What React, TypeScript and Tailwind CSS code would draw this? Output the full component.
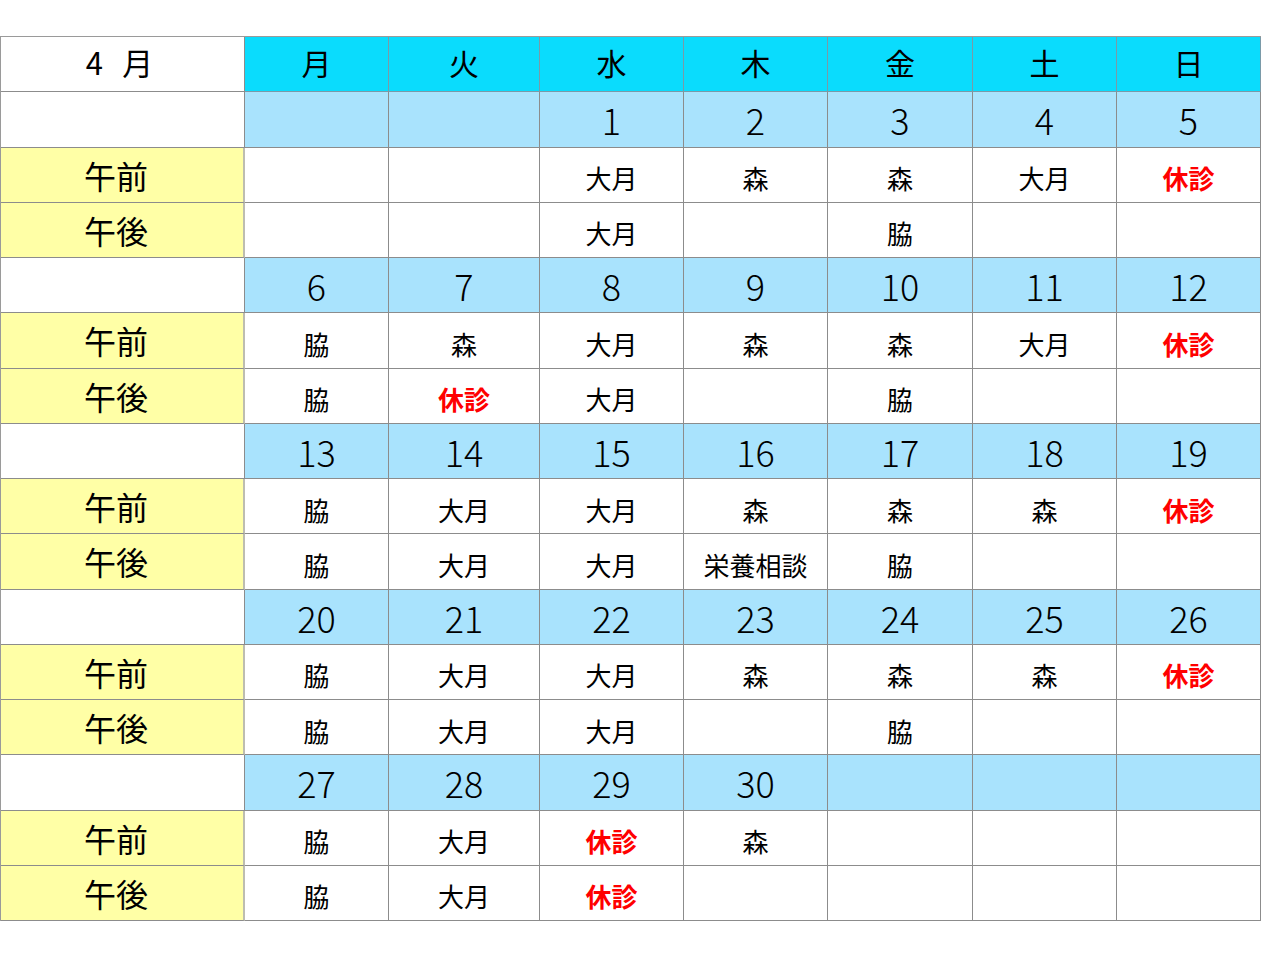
import React from "react";

const cols = ["月", "火", "水", "木", "金", "土", "日"];

type Week = { dates: (number | null)[]; am: string[]; pm: string[] };

const weeks: Week[] = [
  {
    dates: [null, null, 1, 2, 3, 4, 5],
    am: ["", "", "大月", "森", "森", "大月", "休診"],
    pm: ["", "", "大月", "", "脇", "", ""],
  },
  {
    dates: [6, 7, 8, 9, 10, 11, 12],
    am: ["脇", "森", "大月", "森", "森", "大月", "休診"],
    pm: ["脇", "休診", "大月", "", "脇", "", ""],
  },
  {
    dates: [13, 14, 15, 16, 17, 18, 19],
    am: ["脇", "大月", "大月", "森", "森", "森", "休診"],
    pm: ["脇", "大月", "大月", "栄養相談", "脇", "", ""],
  },
  {
    dates: [20, 21, 22, 23, 24, 25, 26],
    am: ["脇", "大月", "大月", "森", "森", "森", "休診"],
    pm: ["脇", "大月", "大月", "", "脇", "", ""],
  },
  {
    dates: [27, 28, 29, 30, null, null, null],
    am: ["脇", "大月", "休診", "森", "", "", ""],
    pm: ["脇", "大月", "休診", "", "", "", ""],
  },
];

const font = { fontFamily: '"Noto Sans CJK JP", "Noto Sans", sans-serif' };

function Cell({ text }: { text: string }) {
  const closed = text === "休診";
  return (
    <div
      className={
        "h-[55.25px] flex items-center justify-center pt-[6px] bg-white border-r border-b border-[#8c8c8c] text-[26px] " +
        (closed ? "text-[#ff0000] font-bold" : "text-black font-normal")
      }
    >
      {text}
    </div>
  );
}

export default function App() {
  return (
    <div className="w-[1261px] h-[968px] bg-white pt-[36px]" style={font}>
      <div className="grid grid-cols-[244px_144px_151px_144px_144px_145px_144px_144px] w-[1261px] border-l border-t border-[#9a9a9a]">
        <div className="h-[55.25px] flex items-center justify-center pb-[4px] bg-white border-r border-b border-[#8c8c8c] text-[31px] text-black font-normal tracking-[0.2em]">
          4 月
        </div>
        {cols.map((c) => (
          <div
            key={c}
            className="h-[55.25px] flex items-center justify-center pb-[4px] bg-[#0adcfd] border-r border-b border-[#7a9aa8] text-[30px] text-black font-normal"
          >
            {c}
          </div>
        ))}
        {weeks.map((w, wi) => (
          <React.Fragment key={wi}>
            <div className="h-[55.25px] bg-white border-r border-b border-[#8c8c8c]" />
            {w.dates.map((d, i) => (
              <div
                key={"d" + i}
                className="h-[55.25px] flex items-center justify-center bg-[#a9e3fd] border-r border-b border-[#8c8c8c] text-[36px] font-light text-black"
              >
                {d ?? ""}
              </div>
            ))}
            <div className="h-[55.25px] flex items-center justify-center pr-[12px] bg-[#ffffa6] border-r-2 border-r-[#bdbdb0] border-b border-b-[#8c8c8c] text-[32px] font-normal text-black">
              午前
            </div>
            {w.am.map((t, i) => (
              <Cell key={"a" + i} text={t} />
            ))}
            <div className="h-[55.25px] flex items-center justify-center pr-[12px] bg-[#ffffa6] border-r-2 border-r-[#bdbdb0] border-b border-b-[#8c8c8c] text-[32px] font-normal text-black">
              午後
            </div>
            {w.pm.map((t, i) => (
              <Cell key={"p" + i} text={t} />
            ))}
          </React.Fragment>
        ))}
      </div>
    </div>
  );
}
